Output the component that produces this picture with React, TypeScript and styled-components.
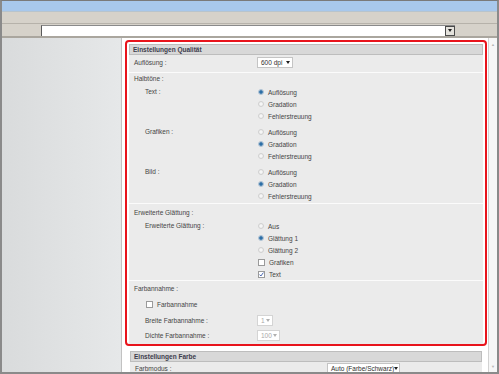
import styled, { createGlobalStyle } from "styled-components";

const GlobalStyle = createGlobalStyle`
  html, body { margin: 0; padding: 0; background: #fff; }
  body { font-family: "Liberation Sans", Arial, sans-serif; }
`;

const Window = styled.div`
  width: 499px;
  height: 374px;
  box-sizing: border-box;
  border-top: 1px solid #7a7a7a;
  border-left: 2px solid #8a8a8a;
  border-right: 2px solid #8a8a8a;
  border-bottom: 2px solid #8a8a8a;
  display: flex;
  flex-direction: column;
  overflow: hidden;
  font-size: 6.5px;
  color: #444;
`;

const TitleBar = styled.div`
  height: 10px;
  background: #a8c8ec;
  border-bottom: 1px solid #b8c4cc;
`;

const MenuBar = styled.div`
  height: 11px;
  background: #d6d2ca;
  border-bottom: 1px solid #b6b2aa;
`;

const ToolBar = styled.div`
  height: 14px;
  box-sizing: border-box;
  display: flex;
  align-items: center;
  padding: 0 42px 0 39px;
  background: #d6d2ca;
  border-bottom: 2px solid #aaa69e;
`;

const PathInput = styled.div`
  flex: 1;
  height: 11px;
  box-sizing: border-box;
  display: flex;
  justify-content: flex-end;
  background: #fff;
  border-top: 1px solid #8a8a8a;
  border-left: 1px solid #5a5a5a;
`;

const DropButton = styled.div`
  width: 10px;
  height: 10px;
  box-sizing: border-box;
  display: flex;
  align-items: center;
  justify-content: center;
  background: #e4e2dc;
  border: 1px solid #4a4a4a;
`;

const Arrow = styled.span<{ $muted?: boolean }>`
  width: 0;
  height: 0;
  border-left: 2.5px solid transparent;
  border-right: 2.5px solid transparent;
  border-top: 3px solid ${(p) => (p.$muted ? "#b0b0b0" : "#1e1e1e")};
`;

const Main = styled.div`
  flex: 1;
  display: flex;
  min-height: 0;
`;

const Sidebar = styled.div`
  width: 119px;
  border-right: 1px solid #c2c2c2;
  background: linear-gradient(to right, #d9dbdc, #e6e8e9);
`;

const Content = styled.div`
  flex: 1;
  min-width: 0;
  background: #fff;
  overflow: hidden;
  padding: 2px 1px 0 3px;
`;

const Scrollbar = styled.div`
  width: 8px;
  border-left: 1px solid #d2d2d2;
  background: #f6f6f6;
  display: flex;
  flex-direction: column;
  justify-content: space-between;
  align-items: center;
  padding: 4px 0 3px;
  color: #b4b4b4;
  font-size: 4px;
`;

const Highlight = styled.div`
  border: 2px solid #e8141c;
  border-radius: 4px;
  padding: 2px 2px 0 2px;
`;

const Section = styled.div<{ $plain?: boolean }>`
  margin: ${(p) => (p.$plain ? "5px 5px 0 5px" : "0")};
`;

const SectionHeader = styled.div`
  height: 11px;
  box-sizing: border-box;
  line-height: 9px;
  padding-left: 3px;
  background: #d8d8d8;
  border: 1px solid #bdbdbd;
  font-size: 6.5px;
  font-weight: bold;
  color: #3c3c4c;
`;

const Panel = styled.div`
  background: #ebebeb;
  padding-bottom: 2px;
`;

const Group = styled.div<{ $top: number; $bottom?: number; $last?: boolean }>`
  padding: ${(p) => p.$top}px 0 ${(p) => p.$bottom ?? 0}px 0;
  border-bottom: ${(p) => (p.$last ? "none" : "1px solid #fbfbfb")};
`;

const Row = styled.div<{ $indent?: boolean; $gap?: number }>`
  display: grid;
  grid-template-columns: ${(p) => (p.$indent ? "112px" : "123px")} 1fr;
  padding-left: ${(p) => (p.$indent ? "16px" : "5px")};
  margin-top: ${(p) => p.$gap ?? 0}px;
  align-items: start;
`;

const Label = styled.div`
  height: 12px;
  line-height: 12px;
  white-space: nowrap;
`;

const Options = styled.div`
  display: flex;
  flex-direction: column;
`;

const Option = styled.div`
  height: 12px;
  display: flex;
  align-items: center;
  gap: 4px;
  padding-left: 1px;
  white-space: nowrap;
`;

const Radio = styled.span<{ $on?: boolean }>`
  width: 6px;
  height: 6px;
  box-sizing: border-box;
  border-radius: 50%;
  border: 1px solid ${(p) => (p.$on ? "#a9bfd2" : "#d0d0d0")};
  background: ${(p) =>
    p.$on
      ? "radial-gradient(circle, #2c6ea6 0 1.4px, #7fa6c8 2px, #eef2f5 3px)"
      : "radial-gradient(circle, #f6f6f6 0 1px, #e4e4e4 3px)"};
`;

const Check = styled.span`
  width: 7px;
  height: 7px;
  box-sizing: border-box;
  border: 1px solid #9a9a9a;
  background: #fff;
  display: flex;
  align-items: center;
  justify-content: center;
`;

const Select = styled.div<{ $w: number; $disabled?: boolean }>`
  width: ${(p) => p.$w}px;
  height: 11px;
  box-sizing: border-box;
  display: flex;
  align-items: center;
  justify-content: space-between;
  padding: 0 2px 0 3px;
  background: #fff;
  border: 1px solid ${(p) => (p.$disabled ? "#d4d4d4" : "#c4c4c4")};
  color: ${(p) => (p.$disabled ? "#a8a8a8" : "#2e2e2e")};
  white-space: nowrap;
`;

const CheckBox = ({ on }: { on?: boolean }) => (
  <Check>
    {on && (
      <svg width="5" height="5" viewBox="0 0 5 5">
        <path d="M0.6 2.6 L1.9 4 L4.4 0.6" fill="none" stroke="#3557a8" strokeWidth="0.9" />
      </svg>
    )}
  </Check>
);

const RadioGroup = ({ items, on }: { items: string[]; on: number }) => (
  <Options>
    {items.map((t, i) => (
      <Option key={t}>
        <Radio $on={i === on} />
        {t}
      </Option>
    ))}
  </Options>
);

const tones = ["Auflösung", "Gradation", "Fehlerstreuung"];

export default function App() {
  return (
    <>
      <GlobalStyle />
      <Window>
        <TitleBar />
        <MenuBar />
        <ToolBar>
          <PathInput>
            <DropButton>
              <Arrow />
            </DropButton>
          </PathInput>
        </ToolBar>
        <Main>
          <Sidebar />
          <Content>
            <Highlight>
              <Section>
                <SectionHeader>Einstellungen Qualität</SectionHeader>
                <Panel>
                  <Group $top={2} $bottom={3}>
                    <Row>
                      <Label>Auflösung :</Label>
                      <Select $w={36}>
                        600 dpi <Arrow />
                      </Select>
                    </Row>
                  </Group>
                  <Group $top={0} $bottom={1}>
                    <Row>
                      <Label>Halbtöne :</Label>
                    </Row>
                    <Row $indent $gap={1}>
                      <Label>Text :</Label>
                      <RadioGroup items={tones} on={0} />
                    </Row>
                    <Row $indent $gap={4}>
                      <Label>Grafiken :</Label>
                      <RadioGroup items={tones} on={1} />
                    </Row>
                    <Row $indent $gap={4}>
                      <Label>Bild :</Label>
                      <RadioGroup items={tones} on={1} />
                    </Row>
                  </Group>
                  <Group $top={3}>
                    <Row>
                      <Label>Erweiterte Glättung :</Label>
                    </Row>
                    <Row $indent $gap={1}>
                      <Label>Erweiterte Glättung :</Label>
                      <Options>
                        <RadioGroup items={["Aus", "Glättung 1", "Glättung 2"]} on={1} />
                        <Option>
                          <CheckBox />
                          Grafiken
                        </Option>
                        <Option>
                          <CheckBox on />
                          Text
                        </Option>
                      </Options>
                    </Row>
                  </Group>
                  <Group $top={2} $last>
                    <Row>
                      <Label>Farbannahme :</Label>
                    </Row>
                    <Row $indent $gap={3}>
                      <Option>
                        <CheckBox />
                        Farbannahme
                      </Option>
                    </Row>
                    <Row $indent $gap={5}>
                      <Label>Breite Farbannahme :</Label>
                      <Select $w={16} $disabled>
                        1 <Arrow $muted />
                      </Select>
                    </Row>
                    <Row $indent $gap={3}>
                      <Label>Dichte Farbannahme :</Label>
                      <Select $w={23} $disabled>
                        100 <Arrow $muted />
                      </Select>
                    </Row>
                  </Group>
                </Panel>
              </Section>
            </Highlight>
            <Section $plain>
              <SectionHeader>Einstellungen Farbe</SectionHeader>
              <Panel>
                <Group $top={1} $last>
                  <Row>
                    <Label>Farbmodus :</Label>
                    <Select $w={73} style={{ marginLeft: 69 }}>
                      Auto (Farbe/Schwarz) <Arrow />
                    </Select>
                  </Row>
                </Group>
              </Panel>
            </Section>
          </Content>
          <Scrollbar>
            <span>▲</span>
            <span>▼</span>
          </Scrollbar>
        </Main>
      </Window>
    </>
  );
}
